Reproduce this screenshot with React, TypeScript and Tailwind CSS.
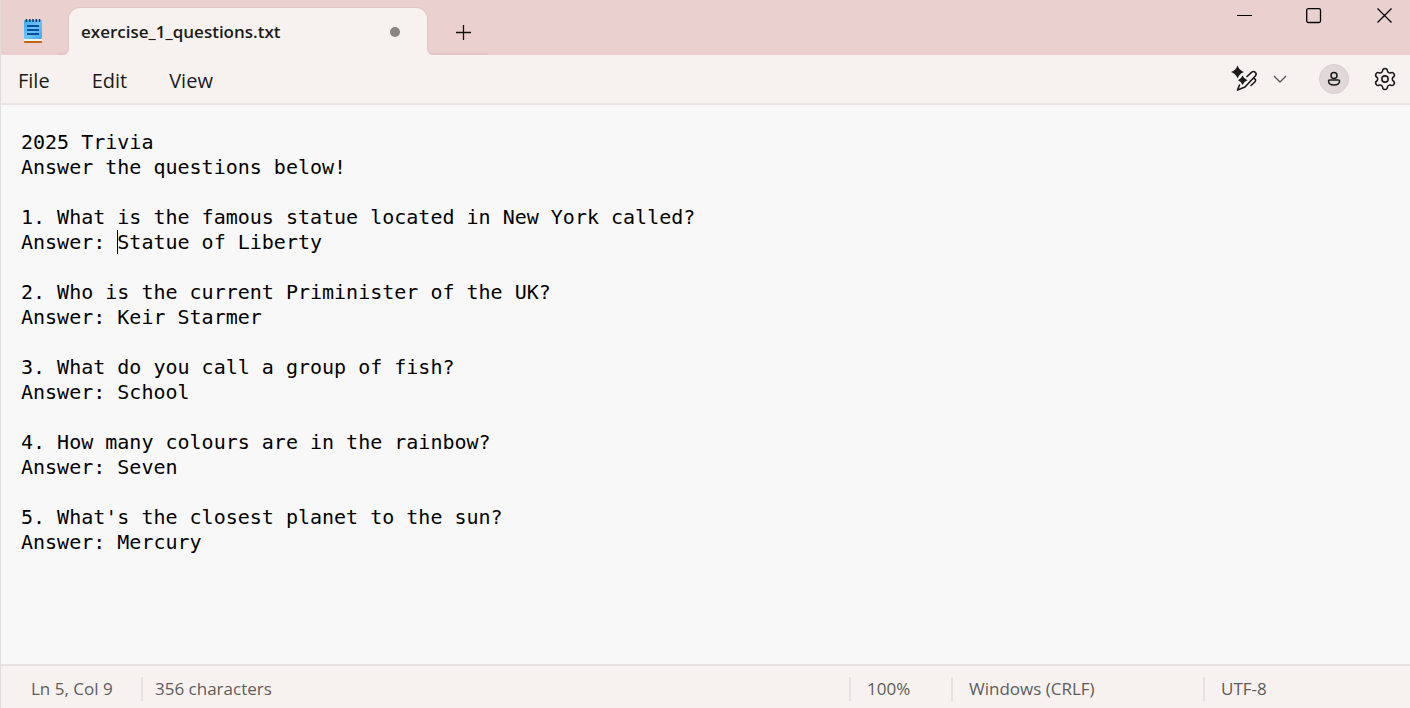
import { useState } from "react";
import { Settings } from "lucide-react";

const DOCUMENT = `2025 Trivia
Answer the questions below!

1. What is the famous statue located in New York called?
Answer: Statue of Liberty

2. Who is the current Priminister of the UK?
Answer: Keir Starmer

3. What do you call a group of fish?
Answer: School

4. How many colours are in the rainbow?
Answer: Seven

5. What's the closest planet to the sun?
Answer: Mercury`;

function NotepadIcon() {
  return (
    <svg width="20" height="26" viewBox="0 0 20 26" aria-hidden="true">
      <defs>
        <linearGradient id="page" x1="0" y1="0" x2="1" y2="1">
          <stop offset="0" stopColor="#3aa6ea" />
          <stop offset="0.5" stopColor="#6cc4f5" />
          <stop offset="1" stopColor="#3ea9ec" />
        </linearGradient>
      </defs>
      <rect x="1" y="21" width="18" height="5" rx="1" fill="#c2640c" />
      <rect x="1" y="21" width="18" height="3" fill="#f3f3f3" />
      <rect x="1" y="3" width="18" height="19" rx="1" fill="url(#page)" />
      <path d="M3.5 2v3M6.8 2v3M10 2v3M13.300 2v3M16.500 2v3" stroke="#12406f" strokeWidth="1.600" />
      <path d="M4 9h12M4 13h12M4 17h12" stroke="#0a4f9e" strokeWidth="2" />
    </svg>
  );
}

function RewriteIcon() {
  return (
    <svg width="28" height="28" viewBox="0 0 28 28" fill="none" stroke="#1b1b1b" strokeWidth="1.600" strokeLinejoin="round" strokeLinecap="round" aria-hidden="true">
      <path d="M6.500 0.500 Q8.300 5.200 13 7 Q8.300 8.800 6.500 13.500 Q5 8.800 0 7 Q5 5.200 6.500 0.500Z" fill="#1b1b1b" stroke="none" />
      <path d="M11.500 10.500 Q13 14 16.500 15.200 Q13 16.500 11.500 20 Q10.300 16.500 7 15.200 Q10.300 14 11.500 10.500Z" fill="#1b1b1b" stroke="none" />
      <path d="M16 11.500 20.500 7.300 Q22.500 5.700 24.300 7.300 Q26 9 24.300 11 L14 22 L6.500 25 L8.500 20" />
      <path d="M23 13.500 Q25.800 14.500 23.800 17 L20 20.500" />
    </svg>
  );
}

export default function App() {
  const [text, setText] = useState(DOCUMENT);
  return (
    <div className="flex min-h-screen flex-col border-l border-[#dedede] bg-[#f8f8f8] font-['Open_Sans',sans-serif] text-[#1b1b1b]">
      <header className="flex h-[55px] items-end bg-[#ebd0d0]">
        <div className="flex h-[55px] w-14 items-center justify-center pl-2 pt-1">
          <NotepadIcon />
        </div>
        <div className="z-10 -mr-px h-2 w-3 bg-[#f7f2ef]">
          <div className="h-full rounded-br-md border-b-2 border-r border-[#e0c6c6] bg-[#ebd0d0]" />
        </div>
        <div className="flex h-12 w-[360px] items-center justify-between rounded-t-xl border-x border-t border-[#dfc6c6] bg-[#f7f2ef] pl-3 pr-[27px]">
          <span className="text-[17px] font-semibold leading-6">exercise_1_questions.txt</span>
          <span className="size-2.5 rounded-full bg-[#8a8583]" />
        </div>
        <div className="z-10 -ml-px h-2 w-[61px] bg-[#f7f2ef]">
          <div className="h-full rounded-bl-md border-b-2 border-l border-[#e0c6c6] bg-[#ebd0d0]" />
        </div>
        <button type="button" aria-label="New tab" className="z-10 -ml-[45px] flex h-[46px] w-10 items-center justify-center">
          <svg width="16" height="16" viewBox="0 0 16 16" stroke="#111" strokeWidth="1.300" aria-hidden="true">
            <path d="M8.500 1v15M1 8.500h15" />
          </svg>
        </button>
        <div className="ml-auto flex gap-[18px] self-start">
          <button type="button" aria-label="Minimize" className="flex h-8 w-[52px] items-center justify-center">
            <svg width="16" height="16" viewBox="0 0 16 16" stroke="#000" aria-hidden="true">
              <path d="M1 7.500h15" />
            </svg>
          </button>
          <button type="button" aria-label="Maximize" className="flex h-8 w-[52px] items-center justify-center">
            <svg width="16" height="16" viewBox="0 0 16 16" fill="none" stroke="#000" strokeWidth="1.300" aria-hidden="true">
              <rect x="0.700" y="0.700" width="13.800" height="13.800" rx="1.500" />
            </svg>
          </button>
          <button type="button" aria-label="Close" className="flex h-8 w-[52px] items-center justify-center">
            <svg width="16" height="16" viewBox="0 0 16 16" stroke="#000" strokeWidth="1.300" aria-hidden="true">
              <path d="M1.500 0.500l14 14M15.500 0.500l-14 14" />
            </svg>
          </button>
        </div>
      </header>

      <nav aria-label="Menu" className="flex h-[50px] items-center border-b-2 border-[#e9e3e2] bg-[#f7f2ef]">
        <div className="flex gap-[42px] pl-[17px] pt-1 text-xl">
          <button type="button">File</button>
          <button type="button">Edit</button>
          <button type="button">View</button>
        </div>
        <div className="ml-auto flex items-center pr-[13px]">
          <button type="button" aria-label="Writing tools" className="flex items-center gap-3.5">
            <RewriteIcon />
            <svg width="14" height="14" viewBox="0 0 14 14" fill="none" stroke="#555" strokeWidth="1.300" aria-hidden="true">
              <path d="M1 4l6 6 6-6" />
            </svg>
          </button>
          <button type="button" aria-label="Account" className="ml-8 flex size-[30px] items-center justify-center rounded-full border border-[#d6cecf] bg-[#e0d8d9]">
            <svg width="16" height="16" viewBox="0 0 16 16" fill="none" stroke="#1b1b1b" strokeWidth="1.500" aria-hidden="true">
              <circle cx="8" cy="4.500" r="3" />
              <path d="M3.500 9h9q1 0 1 1 0 4-5.500 4t-5.500-4q0-1 1-1z" />
            </svg>
          </button>
          <button type="button" aria-label="Settings" className="ml-6">
            <Settings size={24} strokeWidth={1.5} viewBox="0.5 0.5 23 23" aria-hidden="true" />
          </button>
        </div>
      </nav>

      <main className="relative flex grow">
        <textarea
          aria-label="Text editor"
          spellCheck={false}
          value={text}
          onChange={(e) => setText(e.target.value)}
          className="grow resize-none bg-transparent px-5 pt-[25px] font-['DejaVu_Sans_Mono',monospace] text-xl leading-[25px] text-black outline-none"
        />
        <span className="pointer-events-none absolute left-[116px] top-[125px] h-6 w-px bg-black" />
      </main>

      <footer className="flex h-11 items-center border-t-2 border-[#e8e2e3] bg-[#f7f2ef] pt-1 text-[17px] leading-6 text-[#5f5c5b]">
        <span className="w-[140px] pl-[30px]">Ln 5, Col 9</span>
        <span className="border-l-2 border-[#e6e0e1] pl-3">356 characters</span>
        <div className="ml-auto flex">
          <span className="w-[102px] border-l-2 border-[#e6e0e1] pl-4">100%</span>
          <span className="w-[252px] border-l-2 border-[#e6e0e1] pl-4">Windows (CRLF)</span>
          <span className="w-[207px] border-l-2 border-[#e6e0e1] pl-4">UTF-8</span>
        </div>
      </footer>
    </div>
  );
}
